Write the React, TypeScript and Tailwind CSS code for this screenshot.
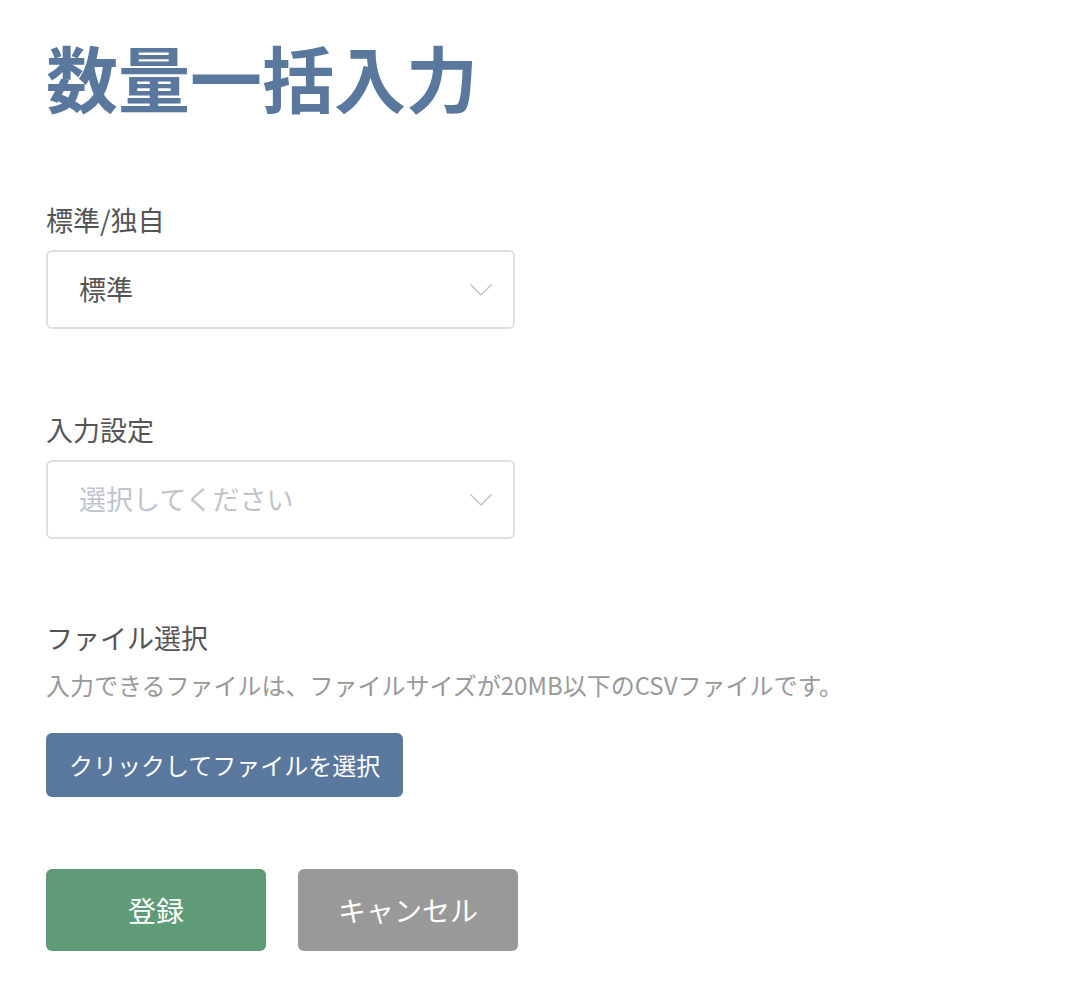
import { useState } from 'react';

const font = { fontFamily: '"Noto Sans CJK JP", "Noto Sans", sans-serif' };

function Chevron() {
  return (
    <svg width="24" height="14" viewBox="0 0 24 14" fill="none" className="shrink-0">
      <path d="M1.5 1.5 L12 12 L22.5 1.5" stroke="#c0c4cc" strokeWidth="1.5" />
    </svg>
  );
}

interface SelectProps {
  value: string;
  placeholder: string;
}

function SelectBox({ value, placeholder }: SelectProps) {
  return (
    <div className="flex h-[79px] w-[469px] items-center justify-between rounded-[6px] border-2 border-[#dcdfe6] bg-white pl-[31px] pr-[20px]">
      {value ? (
        <span className="text-[27px] text-[#555]">{value}</span>
      ) : (
        <span className="text-[27px] text-[#c0c4cc]">{placeholder}</span>
      )}
      <Chevron />
    </div>
  );
}

export default function App() {
  const [kind] = useState('標準');
  const [setting] = useState('');

  return (
    <div className="min-h-screen bg-white px-[46px] pt-[40px]" style={font}>
      <h1 className="text-[72px] font-bold leading-none text-[#5a789e]">数量一括入力</h1>

      {/* 標準/独自 */}
      <div className="mt-[88px]">
        <label className="block text-[27px] leading-[40px] text-[#555]">標準/独自</label>
        <div className="mt-[10px]">
          <SelectBox value={kind} placeholder="選択してください" />
        </div>
      </div>

      {/* 入力設定 */}
      <div className="mt-[81px]">
        <label className="block text-[27px] leading-[40px] text-[#555]">入力設定</label>
        <div className="mt-[10px]">
          <SelectBox value={setting} placeholder="選択してください" />
        </div>
      </div>

      {/* ファイル選択 */}
      <div className="mt-[79px]">
        <label className="block text-[27px] leading-[40px] text-[#555]">ファイル選択</label>
        <p className="mt-[10px] text-[24px] leading-[34px] text-[#999]">
          入力できるファイルは、ファイルサイズが20MB以下のCSVファイルです。
        </p>
        <button
          type="button"
          className="mt-[31px] h-[64px] rounded-[6px] bg-[#5a789e] px-[23px] text-[24px] text-white"
        >
          クリックしてファイルを選択
        </button>
      </div>

      <div className="mt-[72px] flex gap-[32px]">
        <button type="button" className="h-[82px] w-[220px] rounded-[6px] bg-[#5e9b76] text-[28px] text-white">
          登録
        </button>
        <button type="button" className="h-[82px] w-[220px] rounded-[6px] bg-[#999999] text-[28px] text-white">
          キャンセル
        </button>
      </div>
    </div>
  );
}
